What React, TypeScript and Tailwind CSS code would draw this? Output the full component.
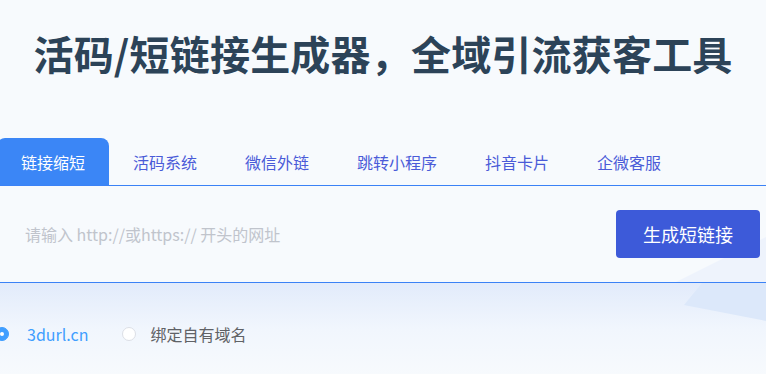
import React, { useState } from 'react';

const tabs = ['链接缩短', '活码系统', '微信外链', '跳转小程序', '抖音卡片', '企微客服'];

const font = { fontFamily: '"Noto Sans CJK SC", "Noto Sans", sans-serif' };

export default function App() {
    const [active, setActive] = useState(0);
    const [domain, setDomain] = useState<'own' | 'custom'>('own');

    return (
        <div className="w-[766px] h-[374px] overflow-hidden bg-[#f7fafd] relative" style={font}>
            <h1 className="pt-[25px] text-center text-[40px] leading-[56px] font-bold text-[#2c4358] tracking-[0.2px]">
                活码/短链接生成器，全域引流获客工具
            </h1>

            {/* tabs */}
            <div className="mt-[57px] flex border-b border-[#3b82f6] pl-0 -ml-[3px]">
                {tabs.map((t, i) => (
                    <button
                        key={t}
                        onClick={() => setActive(i)}
                        className={`h-[47px] px-6 text-[16px] flex items-center rounded-t-[8px] ${
                            active === i ? 'bg-[#3b86f6] text-white' : 'text-[#4a5bd8]'
                        }`}
                    >
                        {t}
                    </button>
                ))}
            </div>

            {/* input row */}
            <div className="relative h-[97px] flex items-center border-b border-[#3b82f6] overflow-hidden">
                <div className="absolute right-0 bottom-0 w-[90px] h-[45px] bg-[#eef3fc] [clip-path:polygon(100%_0,100%_100%,0_100%)]" />
                <input
                    className="relative flex-1 h-full pl-[25px] pb-[1px] bg-transparent outline-none text-[16px] text-[#333] placeholder:text-[#c0c4cc]"
                    placeholder="请输入 http://或https:// 开头的网址"
                />
                <button className="relative mr-[6px] w-[144px] h-[48px] rounded-[4px] bg-[#3d5ad9] text-white text-[18px]">
                    生成短链接
                </button>
            </div>

            {/* domain options */}
            <div className="relative h-[92px] bg-gradient-to-b from-[#e2ebfb] via-[#f1f6fd] to-[#f7fafd]">
                <div className="absolute right-0 top-0 w-[82px] h-[38px] bg-[#dce8fa] [clip-path:polygon(22%_0,100%_0,100%_100%,0_58%)]" />
                <div className="relative flex items-center pt-[39px] -ml-[5px] text-[16px]">
                    <label className="flex items-center cursor-pointer" onClick={() => setDomain('own')}>
                        <span className={`w-[14px] h-[14px] rounded-full flex items-center justify-center border ${domain === 'own' ? 'bg-[#409eff] border-[#409eff]' : 'bg-white border-[#dcdfe6]'}`}>
                            {domain === 'own' && <span className="w-[4px] h-[4px] rounded-full bg-white" />}
                        </span>
                        <span className={`ml-[18px] ${domain === 'own' ? 'text-[#409eff]' : 'text-[#606266]'}`}>3durl.cn</span>
                    </label>
                    <label className="flex items-center ml-[34px] cursor-pointer" onClick={() => setDomain('custom')}>
                        <span className={`w-[14px] h-[14px] rounded-full flex items-center justify-center border ${domain === 'custom' ? 'bg-[#409eff] border-[#409eff]' : 'bg-white border-[#dcdfe6]'}`}>
                            {domain === 'custom' && <span className="w-[4px] h-[4px] rounded-full bg-white" />}
                        </span>
                        <span className={`ml-[14px] ${domain === 'custom' ? 'text-[#409eff]' : 'text-[#606266]'}`}>绑定自有域名</span>
                    </label>
                </div>
            </div>
        </div>
    );
}
